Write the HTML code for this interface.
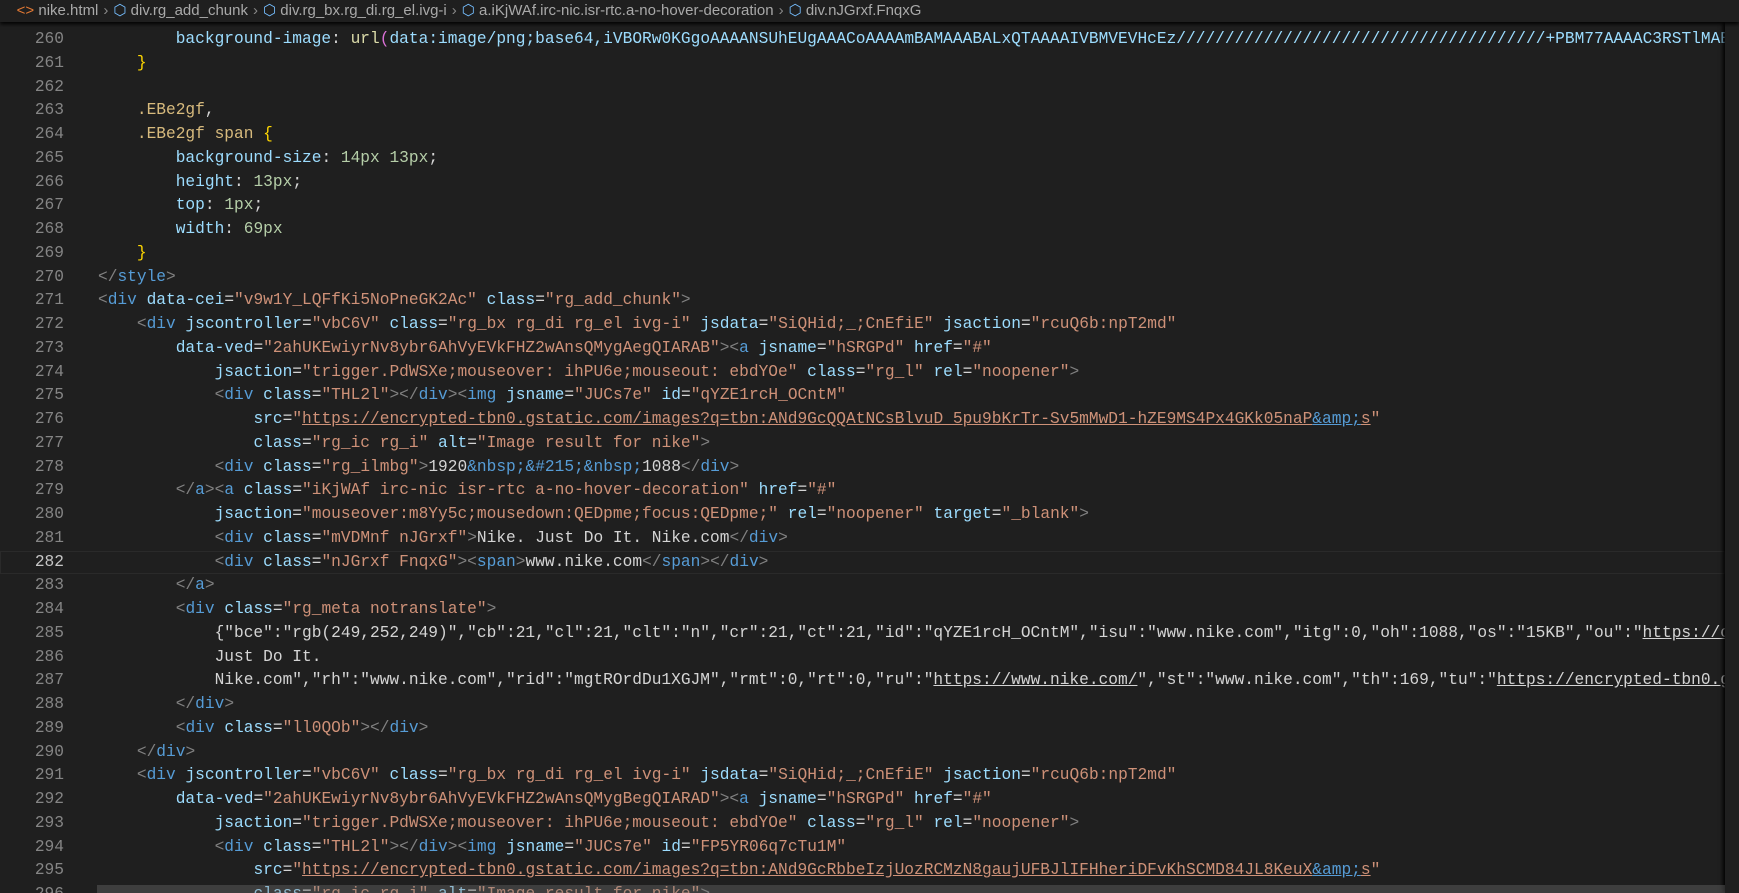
<!DOCTYPE html>
<html><head><meta charset="utf-8"><style>
html,body{margin:0;padding:0;background:#1f1f1f;width:1739px;height:893px;overflow:hidden}
.bc{position:absolute;left:0;top:0;width:1739px;height:22px;background:#1f1f1f;font:15px "Liberation Sans",sans-serif;color:#a9a9a9;white-space:nowrap;line-height:22px;z-index:3;box-shadow:0 2px 4px #000}
.bc .s{color:#888;margin:0 5px}
.bc .ic{color:#75beff}
.ed{position:absolute;left:0;top:28px;width:1725px;height:865px;overflow:hidden;font:16.2px "Liberation Mono",monospace}
.l{height:23.75px;line-height:23.75px;position:relative;white-space:nowrap}
.n{position:absolute;left:0;width:64px;text-align:right;color:#858585}
.c{position:absolute;left:98px;color:#d4d4d4;white-space:pre}
.cur .n{color:#c6c6c6}
.cur{box-shadow:inset 0 0 0 1px #2a2a2a;}
.t{color:#569cd6}.a{color:#9cdcfe}.s1{color:#ce9178}.p{color:#808080}.x{color:#d4d4d4}
.y{color:#dcdcaa}.g{color:#d7ba7d}.nu{color:#b5cea8}.b{color:#ffd700}.pk{color:#da70d6}
.u{text-decoration:underline}
.mm{position:absolute;left:1725px;top:22px;width:14px;height:871px;background:#1f1f1f;box-shadow:-2px 0 4px #000}
.hs{position:absolute;left:97px;top:885px;width:1628px;height:8px;background:rgba(121,121,121,.35)}
</style></head><body>
<div class="bc">&nbsp;&nbsp;&nbsp;&nbsp;<span style="color:#e37933">&lt;&gt;</span> nike.html<span class="s">›</span><span class="ic">⬡</span> div.rg_add_chunk<span class="s">›</span><span class="ic">⬡</span> div.rg_bx.rg_di.rg_el.ivg-i<span class="s">›</span><span class="ic">⬡</span> a.iKjWAf.irc-nic.isr-rtc.a-no-hover-decoration<span class="s">›</span><span class="ic">⬡</span> div.nJGrxf.FnqxG</div>
<div class="ed">
<div class="l"><span class="n">260</span><span class="c">        <span class="a">background-image</span>: <span class="y">url</span><span class="pk">(</span><span class="a">data:image/png;base64,iVBORw0KGgoAAAANSUhEUgAAACoAAAAmBAMAAABALxQTAAAAIVBMVEVHcEz//////////////////////////////////////+PBM77AAAAC3RSTlMAEM</span></span></div>
<div class="l"><span class="n">261</span><span class="c">    <span class="b">}</span></span></div>
<div class="l"><span class="n">262</span><span class="c"></span></div>
<div class="l"><span class="n">263</span><span class="c">    <span class="g">.EBe2gf</span>,</span></div>
<div class="l"><span class="n">264</span><span class="c">    <span class="g">.EBe2gf</span> <span class="g">span</span> <span class="b">{</span></span></div>
<div class="l"><span class="n">265</span><span class="c">        <span class="a">background-size</span>: <span class="nu">14px</span> <span class="nu">13px</span>;</span></div>
<div class="l"><span class="n">266</span><span class="c">        <span class="a">height</span>: <span class="nu">13px</span>;</span></div>
<div class="l"><span class="n">267</span><span class="c">        <span class="a">top</span>: <span class="nu">1px</span>;</span></div>
<div class="l"><span class="n">268</span><span class="c">        <span class="a">width</span>: <span class="nu">69px</span></span></div>
<div class="l"><span class="n">269</span><span class="c">    <span class="b">}</span></span></div>
<div class="l"><span class="n">270</span><span class="c"><span class="p">&lt;/</span><span class="t">style</span><span class="p">&gt;</span></span></div>
<div class="l"><span class="n">271</span><span class="c"><span class="p">&lt;</span><span class="t">div</span> <span class="a">data-cei</span>=<span class="s1">"v9w1Y_LQFfKi5NoPneGK2Ac"</span> <span class="a">class</span>=<span class="s1">"rg_add_chunk"</span><span class="p">&gt;</span></span></div>
<div class="l"><span class="n">272</span><span class="c">    <span class="p">&lt;</span><span class="t">div</span> <span class="a">jscontroller</span>=<span class="s1">"vbC6V"</span> <span class="a">class</span>=<span class="s1">"rg_bx rg_di rg_el ivg-i"</span> <span class="a">jsdata</span>=<span class="s1">"SiQHid;_;CnEfiE"</span> <span class="a">jsaction</span>=<span class="s1">"rcuQ6b:npT2md"</span></span></div>
<div class="l"><span class="n">273</span><span class="c">        <span class="a">data-ved</span>=<span class="s1">"2ahUKEwiyrNv8ybr6AhVyEVkFHZ2wAnsQMygAegQIARAB"</span><span class="p">&gt;&lt;</span><span class="t">a</span> <span class="a">jsname</span>=<span class="s1">"hSRGPd"</span> <span class="a">href</span>=<span class="s1">"#"</span></span></div>
<div class="l"><span class="n">274</span><span class="c">            <span class="a">jsaction</span>=<span class="s1">"trigger.PdWSXe;mouseover: ihPU6e;mouseout: ebdYOe"</span> <span class="a">class</span>=<span class="s1">"rg_l"</span> <span class="a">rel</span>=<span class="s1">"noopener"</span><span class="p">&gt;</span></span></div>
<div class="l"><span class="n">275</span><span class="c">            <span class="p">&lt;</span><span class="t">div</span> <span class="a">class</span>=<span class="s1">"THL2l"</span><span class="p">&gt;&lt;/</span><span class="t">div</span><span class="p">&gt;&lt;</span><span class="t">img</span> <span class="a">jsname</span>=<span class="s1">"JUCs7e"</span> <span class="a">id</span>=<span class="s1">"qYZE1rcH_OCntM"</span></span></div>
<div class="l"><span class="n">276</span><span class="c">                <span class="a">src</span>=<span class="s1">"<span class="u">https://encrypted-tbn0.gstatic.com/images?q=tbn:ANd9GcQQAtNCsBlvuD_5pu9bKrTr-Sv5mMwD1-hZE9MS4Px4GKk05naP</span><span class="t u">&amp;amp;</span><span class="u">s</span>"</span></span></div>
<div class="l"><span class="n">277</span><span class="c">                <span class="a">class</span>=<span class="s1">"rg_ic rg_i"</span> <span class="a">alt</span>=<span class="s1">"Image result for nike"</span><span class="p">&gt;</span></span></div>
<div class="l"><span class="n">278</span><span class="c">            <span class="p">&lt;</span><span class="t">div</span> <span class="a">class</span>=<span class="s1">"rg_ilmbg"</span><span class="p">&gt;</span>1920<span class="t">&amp;nbsp;&amp;#215;&amp;nbsp;</span>1088<span class="p">&lt;/</span><span class="t">div</span><span class="p">&gt;</span></span></div>
<div class="l"><span class="n">279</span><span class="c">        <span class="p">&lt;/</span><span class="t">a</span><span class="p">&gt;&lt;</span><span class="t">a</span> <span class="a">class</span>=<span class="s1">"iKjWAf irc-nic isr-rtc a-no-hover-decoration"</span> <span class="a">href</span>=<span class="s1">"#"</span></span></div>
<div class="l"><span class="n">280</span><span class="c">            <span class="a">jsaction</span>=<span class="s1">"mouseover:m8Yy5c;mousedown:QEDpme;focus:QEDpme;"</span> <span class="a">rel</span>=<span class="s1">"noopener"</span> <span class="a">target</span>=<span class="s1">"_blank"</span><span class="p">&gt;</span></span></div>
<div class="l"><span class="n">281</span><span class="c">            <span class="p">&lt;</span><span class="t">div</span> <span class="a">class</span>=<span class="s1">"mVDMnf nJGrxf"</span><span class="p">&gt;</span>Nike. Just Do It. Nike.com<span class="p">&lt;/</span><span class="t">div</span><span class="p">&gt;</span></span></div>
<div class="l cur"><span class="n">282</span><span class="c">            <span class="p">&lt;</span><span class="t">div</span> <span class="a">class</span>=<span class="s1">"nJGrxf FnqxG"</span><span class="p">&gt;&lt;</span><span class="t">span</span><span class="p">&gt;</span>www.nike.com<span class="p">&lt;/</span><span class="t">span</span><span class="p">&gt;&lt;/</span><span class="t">div</span><span class="p">&gt;</span></span></div>
<div class="l"><span class="n">283</span><span class="c">        <span class="p">&lt;/</span><span class="t">a</span><span class="p">&gt;</span></span></div>
<div class="l"><span class="n">284</span><span class="c">        <span class="p">&lt;</span><span class="t">div</span> <span class="a">class</span>=<span class="s1">"rg_meta notranslate"</span><span class="p">&gt;</span></span></div>
<div class="l"><span class="n">285</span><span class="c">            {"bce":"rgb(249,252,249)","cb":21,"cl":21,"clt":"n","cr":21,"ct":21,"id":"qYZE1rcH_OCntM","isu":"www.nike.com","itg":0,"oh":1088,"os":"15KB","ou":"<span class="u">https://c.</span></span></div>
<div class="l"><span class="n">286</span><span class="c">            Just Do It.</span></div>
<div class="l"><span class="n">287</span><span class="c">            Nike.com","rh":"www.nike.com","rid":"mgtROrdDu1XGJM","rmt":0,"rt":0,"ru":"<span class="u">https://www.nike.com/</span>","st":"www.nike.com","th":169,"tu":"<span class="u">https://encrypted-tbn0.gst</span></span></div>
<div class="l"><span class="n">288</span><span class="c">        <span class="p">&lt;/</span><span class="t">div</span><span class="p">&gt;</span></span></div>
<div class="l"><span class="n">289</span><span class="c">        <span class="p">&lt;</span><span class="t">div</span> <span class="a">class</span>=<span class="s1">"ll0QOb"</span><span class="p">&gt;&lt;/</span><span class="t">div</span><span class="p">&gt;</span></span></div>
<div class="l"><span class="n">290</span><span class="c">    <span class="p">&lt;/</span><span class="t">div</span><span class="p">&gt;</span></span></div>
<div class="l"><span class="n">291</span><span class="c">    <span class="p">&lt;</span><span class="t">div</span> <span class="a">jscontroller</span>=<span class="s1">"vbC6V"</span> <span class="a">class</span>=<span class="s1">"rg_bx rg_di rg_el ivg-i"</span> <span class="a">jsdata</span>=<span class="s1">"SiQHid;_;CnEfiE"</span> <span class="a">jsaction</span>=<span class="s1">"rcuQ6b:npT2md"</span></span></div>
<div class="l"><span class="n">292</span><span class="c">        <span class="a">data-ved</span>=<span class="s1">"2ahUKEwiyrNv8ybr6AhVyEVkFHZ2wAnsQMygBegQIARAD"</span><span class="p">&gt;&lt;</span><span class="t">a</span> <span class="a">jsname</span>=<span class="s1">"hSRGPd"</span> <span class="a">href</span>=<span class="s1">"#"</span></span></div>
<div class="l"><span class="n">293</span><span class="c">            <span class="a">jsaction</span>=<span class="s1">"trigger.PdWSXe;mouseover: ihPU6e;mouseout: ebdYOe"</span> <span class="a">class</span>=<span class="s1">"rg_l"</span> <span class="a">rel</span>=<span class="s1">"noopener"</span><span class="p">&gt;</span></span></div>
<div class="l"><span class="n">294</span><span class="c">            <span class="p">&lt;</span><span class="t">div</span> <span class="a">class</span>=<span class="s1">"THL2l"</span><span class="p">&gt;&lt;/</span><span class="t">div</span><span class="p">&gt;&lt;</span><span class="t">img</span> <span class="a">jsname</span>=<span class="s1">"JUCs7e"</span> <span class="a">id</span>=<span class="s1">"FP5YR06q7cTu1M"</span></span></div>
<div class="l"><span class="n">295</span><span class="c">                <span class="a">src</span>=<span class="s1">"<span class="u">https://encrypted-tbn0.gstatic.com/images?q=tbn:ANd9GcRbbeIzjUozRCMzN8gaujUFBJlIFHheriDFvKhSCMD84JL8KeuX</span><span class="t u">&amp;amp;</span><span class="u">s</span>"</span></span></div>
<div class="l"><span class="n">296</span><span class="c">                <span class="a">class</span>=<span class="s1">"rg_ic rg_i"</span> <span class="a">alt</span>=<span class="s1">"Image result for nike"</span><span class="p">&gt;</span></span></div>
</div>
<div class="mm"></div>
<div class="hs"></div>
</body></html>
